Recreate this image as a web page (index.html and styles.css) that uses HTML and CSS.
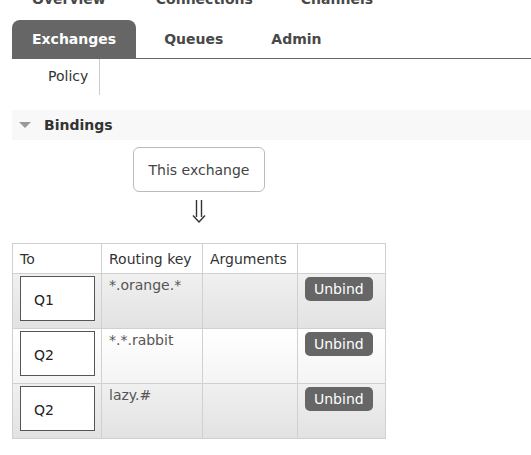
FILE: index.html
```html
<!DOCTYPE html>
<html>
<head>
<meta charset="utf-8">
<link rel="stylesheet" href="styles.css">
</head>
<body>
<div class="page">
  <div class="nav">
    <ul class="tabs">
      <li>Overview</li>
      <li class="wide">Connections</li>
      <li>Channels</li>
    </ul>
    <ul class="tabs tabs-main">
      <li class="active">Exchanges</li>
      <li>Queues</li>
      <li>Admin</li>
    </ul>
    <ul class="subnav">
      <li>Policy</li>
    </ul>
  </div>

  <div class="section-head">
    <span class="triangle"></span>
    <span class="section-title">Bindings</span>
  </div>

  <div class="exchange-box">This exchange</div>
  <div class="arrow">
    <svg width="14" height="23" viewBox="0 0 14 23" aria-label="&#8659;">
      <path d="M4.5 0 V17 M9.5 0 V17 M1 15.5 L7 22 L13 15.5" fill="none" stroke="#333" stroke-width="1.4"/>
    </svg>
  </div>

  <table class="bindings">
    <thead>
      <tr>
        <th class="c-to">To</th>
        <th class="c-key">Routing key</th>
        <th class="c-args">Arguments</th>
        <th class="c-act"></th>
      </tr>
    </thead>
    <tbody>
      <tr class="alt1">
        <td><div class="queue">Q1</div></td>
        <td class="key">*.orange.*</td>
        <td></td>
        <td><span class="btn">Unbind</span></td>
      </tr>
      <tr class="alt2">
        <td><div class="queue">Q2</div></td>
        <td class="key">*.*.rabbit</td>
        <td></td>
        <td><span class="btn">Unbind</span></td>
      </tr>
      <tr class="alt1">
        <td><div class="queue">Q2</div></td>
        <td class="key">lazy.#</td>
        <td></td>
        <td><span class="btn">Unbind</span></td>
      </tr>
    </tbody>
  </table>
</div>
</body>
</html>
```

FILE: styles.css
```css
html, body {
  margin: 0;
  padding: 0;
  background: #fff;
  overflow: hidden;
}
body {
  font-family: "DejaVu Sans", Verdana, sans-serif;
  font-size: 14px;
  color: #444;
}
.page {
  padding-left: 12px;
}
.nav {
  margin-top: -20px;
}
.tabs {
  list-style: none;
  margin: 0;
  padding: 0;
  display: flex;
  gap: 8px;
  height: 38px;
}
.tabs-main {
  margin-top: 2px;
  border-bottom: 1px solid #666;
}
.tabs li {
  padding: 0 20px;
  line-height: 38px;
  font-weight: bold;
  color: #484848;
  border-radius: 8px 8px 0 0;
}
.tabs li.wide {
  padding-left: 22px;
}
.tabs li.active {
  background: #666;
  color: #fff;
}
.subnav {
  list-style: none;
  margin: 0 0 0 24px;
  padding: 0;
  display: flex;
  height: 36px;
}
.subnav li {
  padding: 0 11px 0 12px;
  line-height: 34px;
  border-right: 1px solid #ccc;
  color: #333;
}
.section-head {
  margin-top: 15px;
  height: 30px;
  background: #f8f8f8;
  display: flex;
  align-items: center;
}
.triangle {
  width: 0;
  height: 0;
  margin-left: 7px;
  border-left: 6px solid transparent;
  border-right: 6px solid transparent;
  border-top: 6px solid #999;
}
.section-title {
  margin-left: 13px;
  font-weight: bold;
  color: #333;
}
.exchange-box {
  margin: 7px 0 0 121px;
  width: 130px;
  height: 43px;
  border: 1px solid #bbb;
  border-radius: 6px;
  display: flex;
  align-items: center;
  justify-content: center;
  color: #444;
}
.arrow {
  margin: 8px 0 0 121px;
  width: 132px;
  height: 23px;
  display: flex;
  justify-content: center;
}
.arrow svg {
  display: block;
}
.bindings {
  margin-top: 20px;
  border-collapse: collapse;
  width: 373px;
  table-layout: fixed;
}
.bindings th,
.bindings td {
  box-sizing: border-box;
  border: 1px solid #d0d0d0;
}
.bindings th {
  height: 30px;
  padding: 0 7px;
  text-align: left;
  font-weight: normal;
  color: #333;
  vertical-align: middle;
}
.c-to { width: 89px; }
.c-key { width: 101px; }
.c-args { width: 95px; }
.c-act { width: 88px; }
.bindings td {
  height: 55px;
  padding: 3px 7px;
  vertical-align: top;
  line-height: 17px;
}
.bindings td:first-child {
  padding-top: 2px;
}
.alt1 {
  background: linear-gradient(#f0f0f0, #e2e2e2);
}
.alt2 {
  background: linear-gradient(#fff, #f4f4f4);
}
.key {
  color: #555;
}
.queue {
  box-sizing: border-box;
  width: 75px;
  height: 45px;
  border: 1px solid #555;
  background: #fff;
  display: flex;
  align-items: center;
  padding: 3px 0 0 13px;
  color: #222;
}
.btn {
  display: inline-block;
  background: #666;
  color: #fff;
  border-radius: 5px;
  padding: 0 9px;
  line-height: 24px;
}
```
